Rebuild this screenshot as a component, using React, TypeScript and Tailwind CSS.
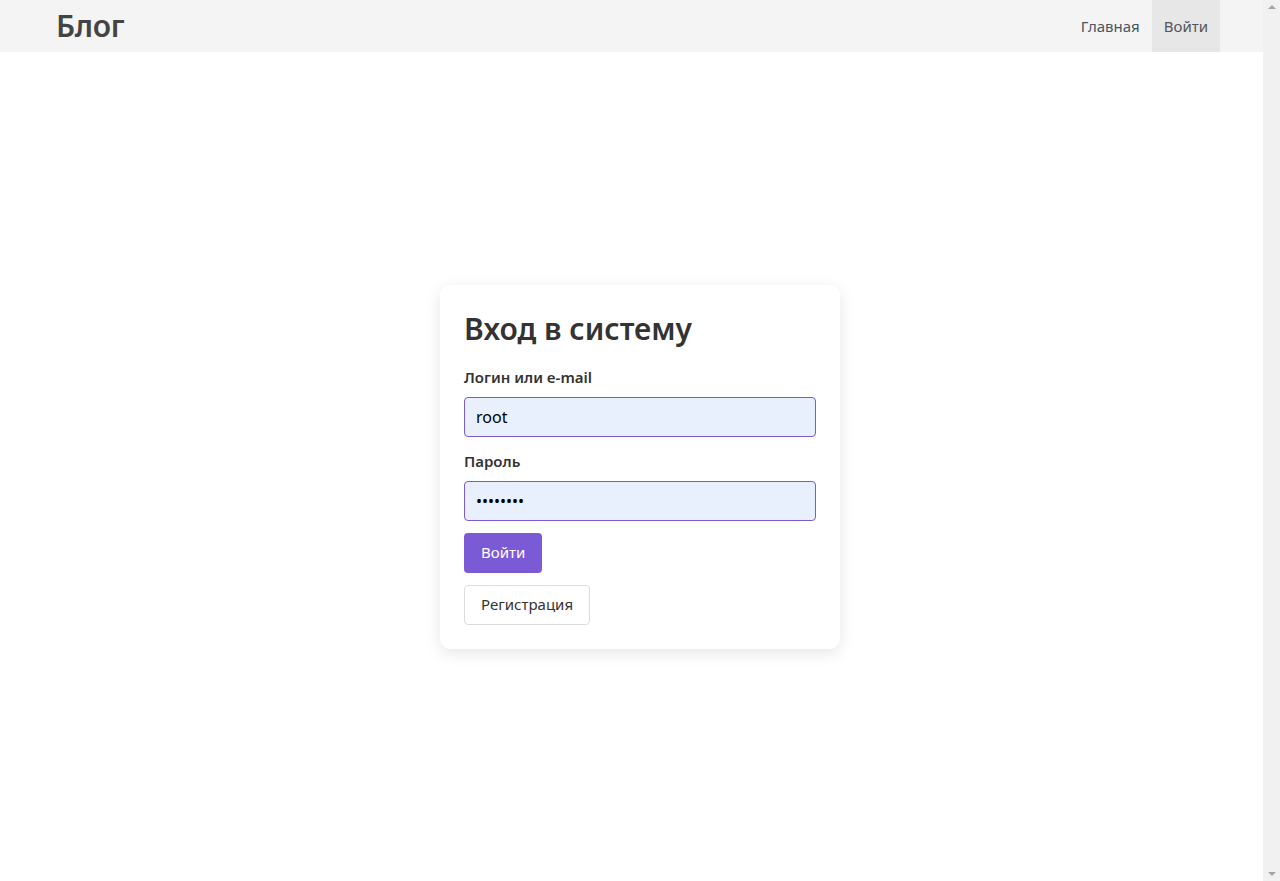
export default function App() {
  return (
    <div className="flex h-[881px] w-[1280px] overflow-hidden bg-white" style={{ fontFamily: '"Noto Sans", "Open Sans", sans-serif' }}>
      <div className="flex w-[1263px] flex-col">
        <nav className="flex h-[52px] items-stretch bg-[#f4f4f4] pl-[56px] pr-[43px]">
          <div className="flex items-center text-[30px] font-semibold leading-none tracking-[-0.3px] text-[#444]">Блог</div>
          <div className="ml-auto flex items-stretch text-[15px] text-[#555]">
            <a className="flex items-center px-[12px] text-[#4a5560]">Главная</a>
            <a className="flex items-center bg-[#e7e7e7] px-[12px] text-[#555]">Войти</a>
          </div>
        </nav>
        <main className="flex flex-1 items-center justify-center pl-[17px]">
          <div className="w-[400px] rounded-[10px] bg-white p-[24px] shadow-[0_4px_16px_rgba(0,0,0,0.10)]">
            <h1 className="mb-[20px] text-[30px] font-semibold leading-[40px] text-[#333]">Вход в систему</h1>
            <label className="mb-[12px] block text-[15px] font-semibold leading-[16px] text-[#333]">Логин или e-mail</label>
            <input
              className="mb-[16px] block h-[40px] w-full rounded-[4px] border border-[#7b5ad6] bg-[#e8f0fe] px-[11px] text-[16px] text-black outline-none"
              defaultValue="root"
            />
            <label className="mb-[12px] block text-[15px] font-semibold leading-[16px] text-[#333]">Пароль</label>
            <input
              type="password"
              className="mb-[12px] block h-[40px] w-full rounded-[4px] border border-[#7b5ad6] bg-[#e8f0fe] px-[11px] text-[16px] text-black outline-none"
              defaultValue="password"
            />
            <button className="mb-[12px] block h-[40px] rounded-[4px] bg-[#7b5ad6] px-[17px] text-[15px] text-white">Войти</button>
            <button className="block h-[40px] rounded-[4px] border border-[#dcdcdc] bg-white px-[16px] text-[15px] text-[#333]">Регистрация</button>
          </div>
        </main>
      </div>
      <div className="flex w-[17px] flex-col items-center justify-between bg-[#f1f1f1] py-[5px]">
        <div className="h-0 w-0 border-x-[4px] border-b-[4px] border-x-transparent border-b-[#a3a3a3]" />
        <div className="h-0 w-0 border-x-[4px] border-t-[4px] border-x-transparent border-t-[#a3a3a3]" />
      </div>
    </div>
  );
}
